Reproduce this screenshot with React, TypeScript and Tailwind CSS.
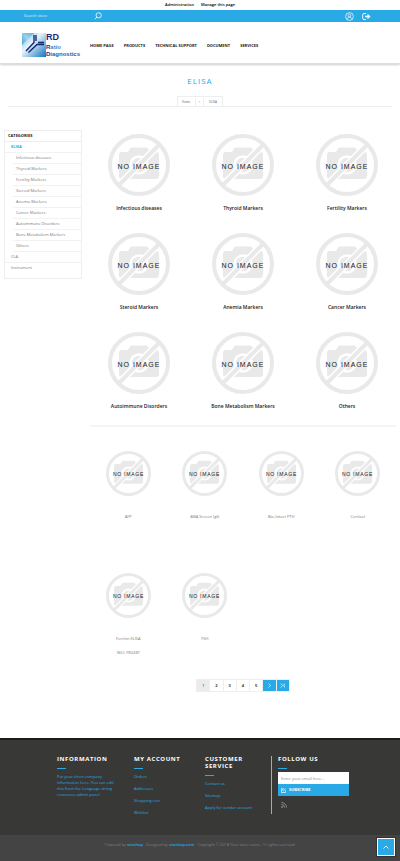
import type { ReactNode } from "react";

const navItems = ["HOME PAGE", "PRODUCTS", "TECHNICAL SUPPORT", "DOCUMENT", "SERVICES"];

const subCategories = [
  "Infectious diseases",
  "Thyroid Markers",
  "Fertility Markers",
  "Steroid Markers",
  "Anemia Markers",
  "Cancer Markers",
  "Autoimmune Disorders",
  "Bone Metabolism Markers",
  "Others",
];

const products = [
  { name: "AFP" },
  { name: "ANA Screen IgG" },
  { name: "Bio-Intact PTH" },
  { name: "Cortisol" },
  { name: "Ferritin ELISA", sku: "SKU: FR248T" },
  { name: "FSH" },
];

function NoImage({ className }: { className: string }) {
  return (
    <svg viewBox="0 0 62 62" className={className} role="img" aria-label="No image">
      <path
        fill="#e9e9e9"
        d="M14 18h6l2-3.500q.6-1 2-1h14q1.400 0 2 1l2 3.500h6q3 0 3 3v21q0 3-3 3H14q-3 0-3-3V21q0-3 3-3z"
      />
      <circle cx="31" cy="31" r="8.500" fill="#e9e9e9" stroke="#fff" strokeWidth="2.500" />
      <path d="M52 10 10 52" stroke="#fff" strokeWidth="7" />
      <path d="M51 11 11 51" stroke="#e9e9e9" strokeWidth="4" />
      <circle cx="31" cy="31" r="29" fill="none" stroke="#e9e9e9" strokeWidth="4" />
      <text
        x="31"
        y="35"
        textAnchor="middle"
        fontSize="7"
        fontWeight="400"
        letterSpacing="1"
        fill="#222"
        fontFamily="Liberation Sans, Arial, sans-serif"
      >
        NO IMAGE
      </text>
    </svg>
  );
}

function Logo() {
  return (
    <a href="#" className="flex items-start" aria-label="RD Ratio Diagnostics">
      <svg viewBox="0 0 24 24" className="size-6" aria-hidden="true">
        <defs>
          <linearGradient id="sky" x1="0" y1="1" x2="1" y2="0">
            <stop offset="0" stopColor="#1479c0" />
            <stop offset="0.500" stopColor="#9fd4ef" />
            <stop offset="1" stopColor="#2d8fce" />
          </linearGradient>
          <linearGradient id="base" x1="0" y1="0" x2="1" y2="1">
            <stop offset="0" stopColor="#5db3e2" />
            <stop offset="0.400" stopColor="#e6f5fc" />
            <stop offset="1" stopColor="#0f74bd" />
          </linearGradient>
        </defs>
        <path d="M0 0h24v24H0z" fill="url(#base)" />
        <path d="M0 0h12L0 12z" fill="url(#sky)" opacity=".6" />
        <path d="M4 18 12 9.500V2M6.500 19.500 15 11.500h7M14 2v6M16 9.500h6" fill="none" stroke="#14256f" strokeWidth="1.400" />
      </svg>
      <span className="flex flex-col font-['Liberation_Sans',Arial,sans-serif] text-[6px] leading-[7px] font-bold text-[#2a8fd0]">
        <span className="mb-[3px] text-[9px] leading-[8px] text-[#1b2a7b]">RD</span>
        <span>
          <span className="text-[#1b2a7b]">R</span>atio
        </span>
        <span className="text-[#1b5fa8]">
          <span className="text-[#1b2a7b]">D</span>iagnostics
        </span>
      </span>
    </a>
  );
}

function FooterColumn({ title, children }: { title: string; children: ReactNode }) {
  return (
    <section>
      <h2 className="text-[6px] leading-[7px] font-bold tracking-widest text-white">{title}</h2>
      <div className="mt-[5px] mb-[5px] h-px w-[9px] bg-[#29a9e5]" />
      {children}
    </section>
  );
}

function FooterLinks({ items }: { items: string[] }) {
  return (
    <ul className="flex flex-col gap-[6px] text-[4px] leading-[6px] text-[#29a9e5]">
      {items.map((item) => (
        <li key={item}>
          <a href="#">{item}</a>
        </li>
      ))}
    </ul>
  );
}

export default function App() {
  return (
    <div className="bg-white font-['Open_Sans',sans-serif] text-[4px] leading-[6px] text-[#777]">
      <div className="flex h-[10px] items-center justify-center gap-[7px] font-semibold text-black">
        <a href="#">Administration</a>
        <a href="#">Manage this page</a>
      </div>

      <div className="flex h-3 items-center justify-between bg-[#29a9e5] pr-[29px] pl-6 text-white">
        <form className="flex items-center" onSubmit={(e) => e.preventDefault()}>
          <input
            type="text"
            aria-label="Search store"
            placeholder="Search store"
            className="w-[70px] bg-transparent outline-none placeholder:text-white/80"
          />
          <button type="submit" aria-label="Search">
            <svg viewBox="0 0 8 8" className="size-2" fill="none" stroke="currentColor" strokeWidth=".8">
              <circle cx="4.700" cy="3.300" r="2.600" />
              <path d="M2.800 5.200.8 7.300" />
            </svg>
          </button>
        </form>
        <div className="flex gap-2">
          <a href="#" aria-label="My account">
            <svg viewBox="0 0 9 9" className="size-[9px]" fill="none" stroke="currentColor" strokeWidth=".7">
              <circle cx="4.500" cy="4.500" r="3.900" />
              <circle cx="4.500" cy="3.600" r="1.400" />
              <path d="M2 7.200c.3-1.500 1.200-2 2.500-2s2.200.5 2.500 2" />
            </svg>
          </a>
          <a href="#" aria-label="Log out">
            <svg viewBox="0 0 9 9" className="size-[9px]" fill="none" stroke="currentColor" strokeWidth=".9">
              <path d="M4 1.500H2q-1.300 0-1.300 1.300v3.400Q.7 7.500 2 7.500h2" />
              <path d="M3 3.700h2.500V1.800l3 2.700-3 2.700V5.300H3z" fill="currentColor" stroke="none" />
            </svg>
          </a>
        </div>
      </div>

      <header className="flex h-[42px] items-center gap-[10px] border-b border-[#ddd] px-[22px] pt-[6px] shadow-[0_1px_2px_rgba(0,0,0,0.2)]">
        <Logo />
        <nav className="flex gap-[10px] font-bold text-[#222]">
          {navItems.map((item) => (
            <a key={item} href="#">
              {item}
            </a>
          ))}
        </nav>
      </header>

      <div className="mx-2 flex flex-col items-center border-b border-[#eee] pt-[11px]">
        <h1 className="text-[8px] leading-[12px] tracking-[1px] text-[#29a9e5]">ELISA</h1>
        <nav
          aria-label="Breadcrumb"
          className="mt-[9px] flex h-[10px] items-center divide-x divide-[#eee] border border-b-0 border-[#eee] text-[3px] leading-[8px] text-[#555]"
        >
          <a href="#" className="px-1">Home</a>
          <span className="px-[3px]">&gt;</span>
          <strong className="px-[5px] font-normal">ELISA</strong>
        </nav>
      </div>

      <div className="flex items-start gap-2 px-1 pt-[23px]">
        <aside className="w-[78px] shrink-0 border border-[#eee] pb-[5px]">
          <h2 className="border-b border-[#eee] px-[3px] leading-[10px] font-bold text-[#222]">CATEGORIES</h2>
          <ul className="leading-[10px]">
            <li className="border-b border-[#f2f2f2] pl-[6px] font-bold text-[#29a9e5]">
              <a href="#">ELISA</a>
            </li>
            {subCategories.map((item) => (
              <li key={item} className="ml-2 border-b border-[#f2f2f2] pl-[3px]">
                <a href="#">{item}</a>
              </li>
            ))}
            <li className="border-b border-[#f2f2f2] pl-[6px]">
              <a href="#">CLA</a>
            </li>
            <li className="pl-[6px]">
              <a href="#">Instrument</a>
            </li>
          </ul>
        </aside>

        <main className="min-w-0 flex-1">
          <div className="-mx-[3px] grid grid-cols-3 gap-y-[21px] pt-1">
            {subCategories.map((item) => (
              <a key={item} href="#" className="flex flex-col items-center gap-2 text-[5px] font-semibold text-[#222]">
                <NoImage className="size-[62px]" />
                <span className="leading-[8px]">{item}</span>
              </a>
            ))}
          </div>

          <div className="mt-[15px] grid grid-cols-4 border-t-2 border-[#f4f4f4] pt-6">
            {products.map((p) => (
              <article key={p.name} className="flex h-[122px] flex-col items-center">
                <NoImage className="size-[45px]" />
                <h2 className="mt-[18px]">
                  <a href="#">{p.name}</a>
                </h2>
                {p.sku && <p className="mt-2">{p.sku}</p>}
              </article>
            ))}
          </div>

          <nav
            aria-label="Pages"
            className="mx-auto mt-[-16px] flex h-[13px] w-[94px] divide-x divide-[#eee] border border-[#eee] font-bold text-[#333]"
          >
            <span className="flex flex-1 items-center justify-center bg-[#ebebeb] text-[#29a9e5]">1</span>
            {["2", "3", "4", "5"].map((n) => (
              <a key={n} href="#" className="flex flex-1 items-center justify-center">
                {n}
              </a>
            ))}
            <a href="#" aria-label="Next" className="flex flex-1 items-center justify-center bg-[#29a9e5] text-white">
              <svg viewBox="0 0 5 5" className="size-[5px]" fill="none" stroke="currentColor" strokeWidth=".7">
                <path d="M1.500.5 3.500 2.500l-2 2" />
              </svg>
            </a>
            <a href="#" aria-label="Last" className="flex flex-1 items-center justify-center bg-[#29a9e5] text-white">
              <svg viewBox="0 0 5 5" className="size-[5px]" fill="none" stroke="currentColor" strokeWidth=".7">
                <path d="M.7.5l2 2-2 2M4.200.5v4" />
              </svg>
            </a>
          </nav>
        </main>
      </div>

      <footer className="mt-[46px] border-t-2 border-[#1c1c1c] bg-[#383937]">
        <div className="grid h-[95px] grid-cols-[77fr_71fr_72fr_123fr] pt-4 pl-[57px] text-[#29a9e5]">
          <FooterColumn title="INFORMATION">
            <p className="w-[62px]">
              Put your short company information here. You can edit this from the Language string resources admin panel
            </p>
          </FooterColumn>
          <FooterColumn title="MY ACCOUNT">
            <FooterLinks items={["Orders", "Addresses", "Shopping cart", "Wishlist"]} />
          </FooterColumn>
          <div className="w-[50px]">
            <FooterColumn title="CUSTOMER SERVICE">
              <FooterLinks items={["Contact us", "Sitemap", "Apply for vendor account"]} />
            </FooterColumn>
          </div>
          <section className="-ml-[6px] h-[58px] border-l border-[#aaa] pl-[6px]">
            <h2 className="text-[6px] leading-[7px] font-bold tracking-widest text-white">FOLLOW US</h2>
            <div className="mt-[5px] mb-[3px] h-px w-[9px] bg-[#29a9e5]" />
            <form className="w-[71px]" onSubmit={(e) => e.preventDefault()}>
              <input
                type="email"
                aria-label="Enter your email here..."
                placeholder="Enter your email here..."
                className="block h-3 w-full bg-white px-[3px] text-[#333] outline-none placeholder:text-[#888]"
              />
              <button
                type="submit"
                className="flex h-3 w-full items-center gap-[3px] bg-[#29a9e5] px-[3px] font-bold text-white"
              >
                <svg viewBox="0 0 5 5" className="size-[5px]" fill="none" stroke="currentColor" strokeWidth=".7">
                  <path d="M3 .8H.4v3.700h4.200V2.500M.5 1.200l2 1.700L4.700.5" />
                </svg>
                SUBSCRIBE
              </button>
            </form>
            <a href="#" aria-label="RSS" className="mt-[6px] ml-[3px] block w-[6px] text-[#999]">
              <svg viewBox="0 0 6 6" className="size-[6px]" fill="none" stroke="currentColor" strokeWidth=".8">
                <circle cx="1" cy="5" r=".5" fill="currentColor" />
                <path d="M.4 2.500A3 3 0 0 1 3.500 5.600M.4.500A5 5 0 0 1 5.500 5.600" />
              </svg>
            </a>
          </section>
        </div>
        <div className="flex h-[26px] justify-center gap-[3px] bg-[#444] pt-[7px] font-light text-[#999]">
          <span>
            Powered by <a href="#" className="font-semibold text-[#29a9e5]">seashop</a>
          </span>
          <span>
            Designed by <a href="#" className="font-semibold text-[#29a9e5]">seashop.com</a>
          </span>
          <span>Copyright © 2018 Your store name. All rights reserved.</span>
        </div>
      </footer>

      <button
        type="button"
        aria-label="Back to top"
        className="fixed right-[5px] bottom-[5px] flex size-[18px] items-center justify-center border border-white bg-[#29a9e5] text-white outline outline-[#333]"
      >
        <svg viewBox="0 0 6 4" className="h-1 w-[6px]" fill="none" stroke="currentColor" strokeWidth=".9">
          <path d="M.5 3.500 3 1l2.500 2.500" />
        </svg>
      </button>
    </div>
  );
}
